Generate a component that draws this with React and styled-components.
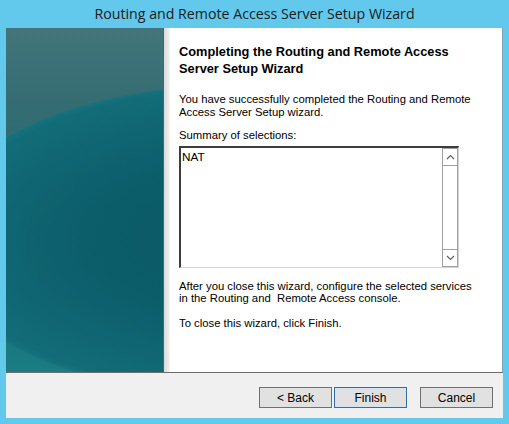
import React from 'react'
import styled, { createGlobalStyle } from 'styled-components'

const Global = createGlobalStyle`
  html, body { margin: 0; padding: 0; }
  body { width: 509px; height: 424px; overflow: hidden; background: #63c9ec; }
  * { box-sizing: border-box; }
`

const Window = styled.div`
  width: 509px;
  height: 424px;
  background: #63c9ec;
  padding: 0 6px 6px 6px;
  display: flex;
  flex-direction: column;
`

const TitleBar = styled.div`
  height: 28px;
  display: flex;
  align-items: center;
  justify-content: center;
  font-family: "Open Sans", "Noto Sans", sans-serif;
  font-size: 14.2px;
  color: #1b1b1b;
  padding-bottom: 1px;
`

const Main = styled.div`
  flex: 1;
  display: flex;
  background: #fff;
  border-bottom: 1px solid #6d6d6d;
`

const Side = styled.div`
  width: 158px;
  background:
    radial-gradient(ellipse 300px 155px at 224px 212px, #0a5865 0%, #0c5e6b 50%, #126c77 96%, #15717b 99%, rgba(21,113,123,0) 100%),
    linear-gradient(180deg, #42767b 0%, #346c72 22%, #1a727a 70%, #1b7c83 100%);
  border-right: 1px solid #3e6a70;
`

const Strip = styled.div`
  width: 6px;
  background: linear-gradient(90deg, #d9d9d9, #f4f4f4);
`

const Content = styled.div`
  flex: 1;
  padding: 15px 0 0 9px;
  font-family: "Liberation Sans", Arial, sans-serif;
  font-size: 11.3px;
  color: #000;
  border-right: 1px solid #7aa9bd;
`

const Heading = styled.h1`
  margin: 0;
  font-size: 12.8px;
  font-weight: bold;
  line-height: 17px;
  width: 300px;
`

const Para = styled.p`
  margin: ${p => p.top || 0}px 0 0 0;
  line-height: 12.5px;
  width: 295px;
`

const ListBox = styled.div`
  margin-top: 4px;
  width: 280px;
  height: 122px;
  border-top: 2px solid #3c3c3c;
  border-left: 2px solid #3c3c3c;
  border-right: 1px solid #d4d4d4;
  border-bottom: 1px solid #d4d4d4;
  display: flex;
  background: #fff;
`

const ListText = styled.div`
  flex: 1;
  padding: 2px 0 0 1px;
  font-size: 11.8px;
`

const ScrollBar = styled.div`
  width: 16px;
  border: 1px solid #a0a0a0;
  display: flex;
  flex-direction: column;
  justify-content: space-between;
  background: #fff;
`

const Arrow = styled.div`
  height: 17px;
  display: flex;
  align-items: center;
  justify-content: center;
  border-top: ${p => (p.down ? '1px solid #a0a0a0' : 'none')};
  border-bottom: ${p => (p.down ? 'none' : '1px solid #a0a0a0')};
`

const Footer = styled.div`
  height: 45px;
  background: #f0f0f0;
  display: flex;
  align-items: center;
  justify-content: flex-end;
  padding: 4px 10px 0 0;
  gap: 2px;
`

const Button = styled.button`
  width: 73px;
  height: 21px;
  margin-left: ${p => p.gapLeft || 0}px;
  background: #e1e1e1;
  border: 1px solid ${p => (p.primary ? '#2f6fa8' : '#707070')};
  box-shadow: ${p => (p.primary ? 'inset 0 0 0 1px #d0e4f5' : 'none')};
  font-family: "Liberation Sans", Arial, sans-serif;
  font-size: 12px;
  color: #000;
  padding: 0;
`

const Chevron = ({ down }) => (
  <svg width="9" height="6" viewBox="0 0 9 6">
    <path
      d={down ? 'M1 1 L4.5 4.5 L8 1' : 'M1 5 L4.5 1.5 L8 5'}
      fill="none"
      stroke="#606060"
      strokeWidth="1.2"
    />
  </svg>
)

export default function App() {
  return (
    <>
      <Global />
      <Window>
        <TitleBar>Routing and Remote Access Server Setup Wizard</TitleBar>
        <Main>
          <Side />
          <Strip />
          <Content>
            <Heading>Completing the Routing and Remote Access Server Setup Wizard</Heading>
            <Para top={16}>You have successfully completed the Routing and Remote Access Server Setup wizard.</Para>
            <Para top={11}>Summary of selections:</Para>
            <ListBox>
              <ListText>NAT</ListText>
              <ScrollBar>
                <Arrow><Chevron /></Arrow>
                <Arrow down><Chevron down /></Arrow>
              </ScrollBar>
            </ListBox>
            <Para top={12}>After you close this wizard, configure the selected services in the Routing and&nbsp; Remote Access console.</Para>
            <Para top={12}>To close this wizard, click Finish.</Para>
          </Content>
        </Main>
        <Footer>
          <Button>&lt; Back</Button>
          <Button primary>Finish</Button>
          <Button gapLeft={11}>Cancel</Button>
        </Footer>
      </Window>
    </>
  )
}
